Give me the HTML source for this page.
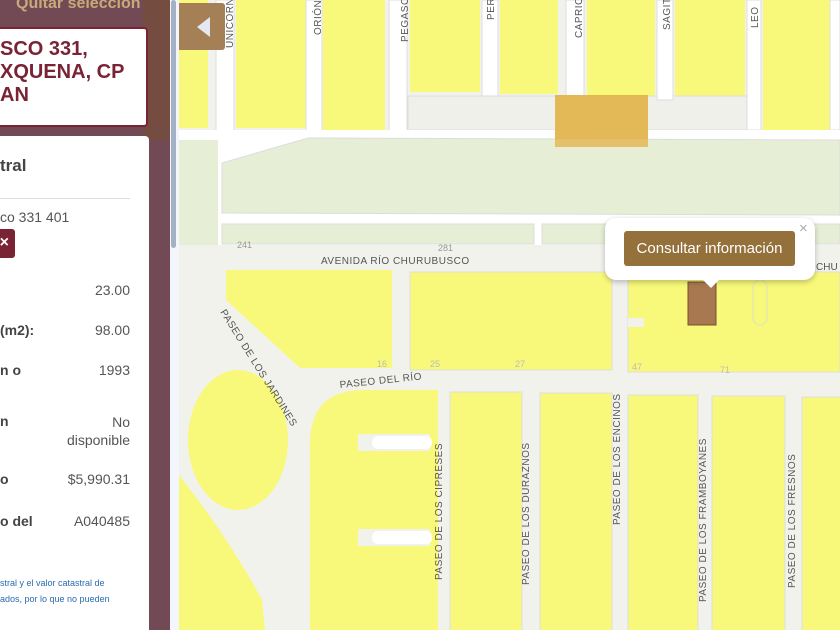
<!DOCTYPE html>
<html><head><meta charset="utf-8"><style>
*{margin:0;padding:0;box-sizing:border-box}
body{width:840px;height:630px;overflow:hidden;position:relative;font-family:"Liberation Sans",sans-serif;background:#f1f1ec}
#side{position:absolute;left:0;top:0;width:170px;height:630px;background:#714a56;overflow:hidden}
.card{position:absolute;background:#fff;border-radius:4px}
.t{position:absolute;white-space:nowrap}
.lab{position:absolute;left:0;font-weight:bold;font-size:14px;color:#444}
.val{position:absolute;right:40px;font-size:14px;color:#555;text-align:right}
</style></head><body>
<svg width="840" height="630" style="position:absolute;left:0;top:0" font-family="Liberation Sans" >
<rect width="840" height="630" fill="#f2f2ed"/>
<g fill="#f8f97a">
<rect x="178" y="0" width="30" height="128"/>
<rect x="236" y="0" width="70" height="128"/>
<rect x="323" y="0" width="62" height="130"/>
<rect x="410" y="0" width="70" height="92"/>
<rect x="500" y="0" width="58" height="94"/>
<rect x="587" y="0" width="68" height="97"/>
<rect x="675" y="0" width="70" height="98"/>
<rect x="763" y="0" width="67" height="135"/>
<rect x="838" y="0" width="2" height="130"/>
</g>
<rect x="408" y="96" width="340" height="34" fill="#f0f0ea" stroke="#ddd" stroke-width="1"/>
<g fill="#fff" stroke="#ddd" stroke-width="1">
<rect x="216" y="0" width="18" height="132"/>
<rect x="306" y="0" width="16" height="132"/>
<rect x="389" y="0" width="18" height="132"/>
<rect x="482" y="0" width="16" height="96"/>
<rect x="566" y="0" width="18" height="96"/>
<rect x="657" y="0" width="16" height="100"/>
<rect x="747" y="0" width="14" height="130"/>
<rect x="830" y="0" width="10" height="130"/>
</g>
<rect x="178" y="130" width="662" height="115" fill="#fff"/>
<rect x="555" y="95" width="93" height="52" fill="#e2b44e" opacity="0.95"/>
<polygon points="222,163 308,138 840,140 840,215 222,213" fill="#e6efd6" stroke="#ddd"/>
<rect x="555" y="138" width="93" height="9" fill="#e2b44e" opacity="0.8"/>
<rect x="178" y="140" width="40" height="105" fill="#e6efd6"/>
<rect x="222" y="224" width="312" height="20" fill="#e6efd6" stroke="#ddd"/>
<rect x="542" y="224" width="298" height="20" fill="#e6efd6" stroke="#ddd"/>
<text x="237" y="248" font-size="9" fill="#999">241</text>
<text x="438" y="251" font-size="9" fill="#999">281</text>
<text x="321" y="264" font-size="10" fill="#555" letter-spacing="0.5">AVENIDA RÍO CHURUBUSCO</text>
<text x="816" y="270" font-size="10" fill="#555">CHU</text>
<path d="M226 270 H392 V368 H300 L226 300 Z" fill="#f8f97a"/>
<rect x="410" y="272" width="202" height="98" fill="#f8f97a" stroke="#ddd"/>
<rect x="628" y="272" width="212" height="100" fill="#f8f97a" stroke="#ddd"/>
<rect x="628" y="318" width="16" height="9" fill="#f2f2ed"/>
<rect x="688" y="282" width="28" height="43" fill="#a87850" stroke="#7a4e30"/>
<rect x="753" y="280" width="14" height="45" rx="7" fill="none" stroke="#e0e0c0"/>
<text x="430" y="367" font-size="9" fill="#bbb">25</text>
<text x="515" y="367" font-size="9" fill="#bbb">27</text>
<text x="632" y="370" font-size="9" fill="#bbb">47</text>
<text x="720" y="373" font-size="9" fill="#bbb">71</text>
<text x="377" y="367" font-size="9" fill="#bbb">16</text>
<ellipse cx="238" cy="440" rx="50" ry="70" fill="#f8f97a"/>
<path d="M310 630 V440 Q312 392 360 390 H438 V630 Z" fill="#f8f97a"/>
<rect x="358" y="434" width="72" height="17" fill="#f2f2ed"/>
<rect x="372" y="436" width="60" height="13" rx="6" fill="#fff"/>
<rect x="358" y="529" width="72" height="17" fill="#f2f2ed"/>
<rect x="372" y="531" width="60" height="13" rx="6" fill="#fff"/>
<g fill="#f8f97a" stroke="#ddd">
<rect x="450" y="392" width="72" height="240"/>
<rect x="540" y="393" width="72" height="240"/>
<rect x="628" y="395" width="70" height="240"/>
<rect x="712" y="396" width="73" height="240"/>
<rect x="802" y="397" width="40" height="240"/>
</g>
<path d="M179 475 Q230 540 262 600 L265 630 H179 Z" fill="#f8f97a"/>
<rect x="179" y="380" width="8" height="95" fill="#f2f2ed"/>
<g font-size="10" fill="#555" letter-spacing="0.5">
<text transform="translate(340,388) rotate(-6)">PASEO DEL RÍO</text>
<text transform="translate(220,312) rotate(58)">PASEO DE LOS JARDINES</text>
<text transform="translate(442,580) rotate(-90)">PASEO DE LOS CIPRESES</text>
<text transform="translate(529,585) rotate(-90)">PASEO DE LOS DURAZNOS</text>
<text transform="translate(620,525) rotate(-90)">PASEO DE LOS ENCINOS</text>
<text transform="translate(706,602) rotate(-90)">PASEO DE LOS FRAMBOYANES</text>
<text transform="translate(795,588) rotate(-90)">PASEO DE LOS FRESNOS</text>
<text transform="translate(233,48) rotate(-90)">UNICORN</text>
<text transform="translate(321,35) rotate(-90)">ORIÓN</text>
<text transform="translate(408,42) rotate(-90)">PEGASO</text>
<text transform="translate(494,20) rotate(-90)">PER</text>
<text transform="translate(582,38) rotate(-90)">CAPRIC</text>
<text transform="translate(670,30) rotate(-90)">SAGIT</text>
<text transform="translate(758,28) rotate(-90)">LEO</text>
</g>
</svg>

<div style="position:absolute;left:179px;top:3px;width:46px;height:47px;background:#a57f55;border-radius:0 3px 3px 0"></div>
<div style="position:absolute;left:197px;top:17px;width:0;height:0;border-top:10px solid transparent;border-bottom:10px solid transparent;border-right:13px solid #e4e8f0"></div>

<div style="position:absolute;left:605px;top:218px;width:210px;height:62px;background:#fff;border-radius:11px;box-shadow:0 2px 6px rgba(0,0,0,.25)"></div>
<div style="position:absolute;left:702px;top:279px;width:0;height:0;border-left:9px solid transparent;border-right:9px solid transparent;border-top:9px solid #fff"></div>
<div style="position:absolute;left:624px;top:231px;width:171px;height:35px;background:#94703a;border-radius:3px;color:#fff;font-size:15px;line-height:35px;text-align:center">Consultar información</div>
<div class="t" style="left:799px;top:220px;font-size:15px;color:#aaa">×</div>

<div id="side">
<div style="position:absolute;left:143px;top:0;width:27px;height:140px;background:#754c40"></div>
<div class="t" style="left:16px;top:-5px;font-size:16px;font-weight:bold;color:#c8a878">Quitar selección</div>
<div class="card" style="left:-10px;top:27px;width:158px;height:100px;border:2px solid #7a2335"></div>
<div class="t" style="left:0;top:38px;font-size:20px;font-weight:bold;color:#7a2335;line-height:23px">SCO 331,<br>XQUENA, CP<br>AN</div>
<div class="card" style="left:-10px;top:136px;width:159px;height:500px"></div>
<div class="t" style="left:0;top:156px;font-size:17px;font-weight:bold;color:#444">tral</div>
<div style="position:absolute;left:0;top:198px;width:130px;height:1px;background:#ddd"></div>
<div class="t" style="left:0;top:209px;font-size:14px;color:#555">co 331 401</div>
<div style="position:absolute;left:-10px;top:229px;width:25px;height:29px;background:#7a2335;border-radius:3px;color:#fff;font-weight:bold;font-size:16px;line-height:28px;text-align:right;padding-right:6px">×</div>
<div class="val" style="top:282px">23.00</div>
<div class="lab" style="top:322px">(m2):</div><div class="val" style="top:322px">98.00</div>
<div class="lab" style="top:362px">n o</div><div class="val" style="top:362px">1993</div>
<div class="lab" style="top:413px">n</div><div class="val" style="top:413px;line-height:18px">No<br>disponible</div>
<div class="lab" style="top:471px">o</div><div class="val" style="top:471px">$5,990.31</div>
<div class="lab" style="top:513px">o del</div><div class="val" style="top:513px">A040485</div>
<div class="t" style="left:0;top:575px;font-size:9px;color:#2a6bb0;line-height:16px">stral y el valor catastral de<br>ados, por lo que no pueden</div>
</div>
<div style="position:absolute;left:170px;top:0;width:9px;height:630px;background:#f3f6fa"></div>
<div style="position:absolute;left:171px;top:0;width:5px;height:248px;background:#a3b1c6;border-radius:3px"></div>
</body></html>
